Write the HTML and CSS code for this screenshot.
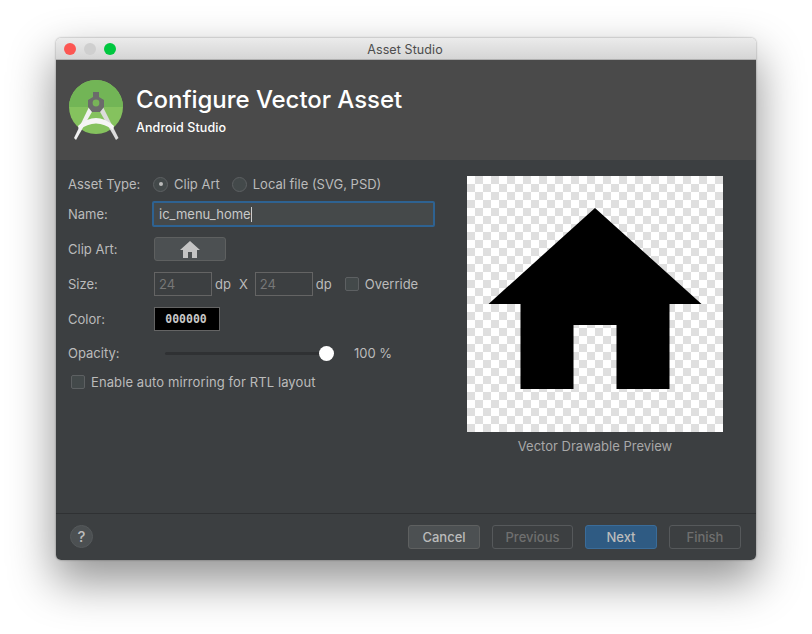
FILE: index.html
```html
<!DOCTYPE html>
<html lang="en">
<head>
    <meta charset="UTF-8">
    <meta name="viewport" content="width=device-width, initial-scale=1.0">
    <title>Asset Studio</title>
    <link rel="stylesheet" href="styles.css">
</head>
<body>
    <div class="window">
        <div class="titlebar">
            <div class="lights">
                <span class="light light-red"></span>
                <span class="light light-grey"></span>
                <span class="light light-green"></span>
            </div>
            <span class="window-title">Asset Studio</span>
        </div>

        <div class="banner">
            <svg class="logo" width="56" height="62" viewBox="0 0 56 62">
                <circle cx="27" cy="27" r="27" fill="#85c25e"/>
                <path d="M0 27a27 27 0 0 1 54 0z" fill="#72b556"/>
                <path d="M5 58 L20 27 L24 30 L7 60z" fill="#f1f1f1"/>
                <path d="M49.500 58 L34 27 L30 30 L47 60z" fill="#dcdcdc"/>
                <path d="M9 46 Q27 30 45 46 L44 50 Q27 37 10 50z" fill="#f5f5f5"/>
                <path d="M24 12h6v5l5 3v7l-4 5h-8l-4-5v-7l5-3z" fill="#6b6b6b"/>
                <circle cx="27" cy="23" r="3.400" fill="#78b458"/>
            </svg>
            <div class="banner-text">
                <h1>Configure Vector Asset</h1>
                <p>Android Studio</p>
            </div>
        </div>

        <div class="content">
            <div class="form">
                <div class="row row-type">
                    <span class="label">Asset Type:</span>
                    <span class="radio radio-on"></span>
                    <span>Clip Art</span>
                    <span class="radio radio-second"></span>
                    <span>Local file (SVG, PSD)</span>
                </div>
                <div class="row row-name">
                    <span class="label">Name:</span>
                    <div class="name-input">ic_menu_home<span class="caret"></span></div>
                </div>
                <div class="row row-clip">
                    <span class="label">Clip Art:</span>
                    <div class="clip-button">
                        <svg width="20" height="18" viewBox="0 0 20 18"><path d="M10 1 L20 10 H17 V18 H12 V12 H8 V18 H3 V10 H0z" fill="#c4c4c4"/></svg>
                    </div>
                </div>
                <div class="row row-size">
                    <span class="label">Size:</span>
                    <div class="num-input">24</div>
                    <span class="unit">dp</span>
                    <span class="unit unit-x">X</span>
                    <div class="num-input">24</div>
                    <span class="unit">dp</span>
                    <span class="checkbox checkbox-override"></span>
                    <span>Override</span>
                </div>
                <div class="row row-color">
                    <span class="label">Color:</span>
                    <div class="color-box">000000</div>
                </div>
                <div class="row row-opacity">
                    <span class="label">Opacity:</span>
                    <div class="slider"><span class="knob"></span></div>
                    <span class="percent">100 %</span>
                </div>
                <div class="row row-mirror">
                    <span class="checkbox"></span>
                    <span>Enable auto mirroring for RTL layout</span>
                </div>
            </div>

            <div class="preview">
                <div class="checker">
                    <svg width="256" height="256" viewBox="0 0 256 256"><path d="M128 32 L234.500 128 H202.500 V213 H149.500 V149 H106.500 V213 H53.500 V128 H21.500z" fill="#000"/></svg>
                </div>
                <div class="caption">Vector Drawable Preview</div>
            </div>
        </div>

        <div class="footer">
            <div class="help">?</div>
            <div class="buttons">
                <div class="btn">Cancel</div>
                <div class="btn btn-prev btn-off">Previous</div>
                <div class="btn btn-next">Next</div>
                <div class="btn btn-off">Finish</div>
            </div>
        </div>
    </div>
</body>
</html>
```

FILE: styles.css
```css
body {
    margin: 0;
    height: 634px;
    overflow: hidden;
    background-color: #fff;
    font-family: Inter, "Liberation Sans", sans-serif;
    font-size: 13px;
    color: #bbb;
}
.window {
    width: 700px;
    height: 522px;
    margin: 38px 0 0 56px;
    border-radius: 5px;
    overflow: hidden;
    display: flex;
    flex-direction: column;
    box-shadow: 0 20px 45px 2px rgba(0, 0, 0, 0.42), 0 0 2px rgba(0, 0, 0, 0.45);
}
.titlebar {
    height: 22px;
    flex: none;
    display: flex;
    align-items: center;
    justify-content: center;
    position: relative;
    background: linear-gradient(#ebebeb, #d5d5d5);
    border-bottom: 1px solid #b0b0b0;
    box-sizing: border-box;
}
.lights {
    position: absolute;
    left: 8px;
    top: 5px;
    display: flex;
    gap: 8px;
}
.light {
    width: 12px;
    height: 12px;
    border-radius: 50%;
}
.light-red {
    background-color: #fc5753;
}
.light-grey {
    background-color: #cfcfcf;
}
.light-green {
    background-color: #00c73f;
}
.window-title {
    padding: 1px 2px 0 0;
    font-size: 12.5px;
    letter-spacing: 0.1px;
    color: #4d4d4d;
}
.banner {
    height: 100px;
    flex: none;
    background-color: #4a4a4a;
    display: flex;
    padding-left: 13px;
    box-sizing: border-box;
}
.logo {
    margin-top: 20px;
}
.banner-text {
    margin-left: 11px;
    color: #fff;
}
.banner-text h1 {
    margin: 25px 0 0;
    font-size: 24px;
    font-weight: 500;
    line-height: 30px;
    letter-spacing: -0.05px;
}
.banner-text p {
    margin: 5px 0 0;
    font-size: 12.5px;
    font-weight: 500;
    line-height: 16px;
    letter-spacing: 0.1px;
}
.content {
    flex: 1;
    background-color: #3c3f41;
    display: flex;
    border-bottom: 1px solid #2f3133;
}
.form {
    width: 411px;
    padding: 12px 0 0 12px;
    box-sizing: border-box;
}
.row {
    display: flex;
    align-items: center;
}
.row-type {
    height: 24px;
}
.row-name {
    height: 28px;
    margin-top: 4px;
}
.row-clip {
    height: 24px;
    margin-top: 9px;
}
.row-size {
    height: 24px;
    margin-top: 11px;
}
.row-color {
    height: 24px;
    margin-top: 11px;
}
.row-opacity {
    height: 24px;
    margin-top: 10px;
}
.row-mirror {
    height: 20px;
    margin-top: 7px;
    padding-left: 3px;
    letter-spacing: 0.1px;
}
.label {
    width: 86px;
    flex: none;
}
.radio {
    width: 13px;
    height: 13px;
    border: 1px solid #5d6062;
    border-radius: 50%;
    background-color: #43494a;
    margin-left: -1px;
    margin-right: 6px;
    display: flex;
    align-items: center;
    justify-content: center;
}
.radio-on::after {
    content: "";
    width: 4px;
    height: 4px;
    border-radius: 50%;
    background-color: #bbb;
}
.radio-second {
    margin-left: 12px;
}
.name-input {
    width: 283px;
    height: 26px;
    margin-left: -2px;
    padding-left: 5px;
    box-sizing: border-box;
    background-color: #45494a;
    border: 2px solid #2e6291;
    border-radius: 2px;
    display: flex;
    align-items: center;
    color: #c8c8c8;
}
.caret {
    width: 1px;
    height: 15px;
    background-color: #ccc;
}
.clip-button {
    width: 72px;
    height: 24px;
    background-color: #4c5052;
    border: 1px solid #5e6060;
    border-radius: 3px;
    box-sizing: border-box;
    display: flex;
    align-items: center;
    justify-content: center;
}
.num-input {
    width: 58px;
    height: 24px;
    border: 1px solid #646464;
    box-sizing: border-box;
    padding-left: 4px;
    line-height: 23px;
    color: #777;
}
.unit {
    margin-left: 3px;
}
.unit-x {
    margin: 0 7px 0 8px;
}
.checkbox {
    width: 12px;
    height: 12px;
    border: 1px solid #5d6062;
    border-radius: 2px;
    background-color: #43494a;
    margin-right: 6px;
}
.checkbox-override {
    margin-left: 13px;
}
.color-box {
    width: 66px;
    height: 24px;
    padding-right: 2px;
    background-color: #000;
    border: 1px solid #646464;
    box-sizing: border-box;
    text-align: center;
    line-height: 22px;
    font-family: "DejaVu Sans Mono", monospace;
    font-size: 11.5px;
    font-weight: 700;
    color: #c8c8c8;
}
.slider {
    width: 162px;
    height: 3px;
    margin-left: 11px;
    background-color: #2f3133;
    border-radius: 2px;
    display: flex;
    align-items: center;
    justify-content: flex-end;
}
.knob {
    width: 15px;
    height: 15px;
    border-radius: 50%;
    background-color: #fff;
    margin-right: -7px;
    flex: none;
}
.percent {
    margin-left: 27px;
}
.preview {
    padding-top: 16px;
}
.checker {
    width: 256px;
    height: 256px;
    background: repeating-conic-gradient(#dfdfdf 0 25%, #fff 0 50%) 0 0 / 16px 16px;
}
.checker svg {
    display: block;
}
.caption {
    margin-top: 6px;
    text-align: center;
    line-height: 16px;
    color: #a8a8a8;
}
.footer {
    height: 46px;
    flex: none;
    background-color: #3c3f41;
    display: flex;
    align-items: flex-start;
    justify-content: space-between;
    padding: 11px 15px 0 14px;
    box-sizing: border-box;
}
.help {
    width: 23px;
    height: 23px;
    border-radius: 50%;
    background-color: #4c5052;
    border: 1px solid #55595b;
    box-sizing: border-box;
    text-align: center;
    line-height: 21px;
    font-size: 15px;
    font-weight: 500;
    color: #bbb;
}
.buttons {
    display: flex;
    gap: 12px;
}
.btn {
    width: 72px;
    height: 24px;
    border: 1px solid #5e6060;
    border-radius: 3px;
    box-sizing: border-box;
    text-align: center;
    line-height: 22px;
    font-weight: 500;
    background-color: #4c5052;
}
.btn-off {
    background-color: transparent;
    color: #6f6f6f;
    border-color: #56595b;
}
.btn-prev {
    width: 81px;
}
.btn-next {
    background-color: #2f5b83;
    border-color: #3a6c99;
}
```
